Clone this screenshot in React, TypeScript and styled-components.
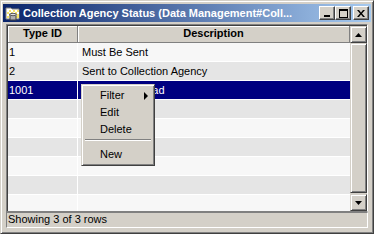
import React from 'react';
import styled, { createGlobalStyle } from 'styled-components';

const GlobalStyle = createGlobalStyle`
  html, body {
    margin: 0;
    padding: 0;
    background: #ffffff;
  }
  body {
    font-family: "Liberation Sans", Arial, sans-serif;
    font-size: 11px;
    color: #000;
  }
`;

const Window = styled.div`
  position: relative;
  width: 374px;
  height: 234px;
  box-sizing: border-box;
  background: #d4d0c8;
  border: 1px solid;
  border-color: #d4d0c8 #404040 #404040 #d4d0c8;
  box-shadow: inset 1px 1px #ffffff, inset -1px -1px #808080;
  padding: 3px 2px 5px 2px;
  display: flex;
  flex-direction: column;
  overflow: hidden;
`;

const TitleBar = styled.div`
  height: 18px;
  flex-shrink: 0;
  display: flex;
  align-items: center;
  padding: 0 2px;
  background: linear-gradient(90deg, #0a246a 0%, #a6caf0 100%);
`;

const TitleIcon = styled.svg`
  width: 16px;
  height: 16px;
  flex-shrink: 0;
`;

const TitleText = styled.div`
  flex: 1;
  margin-left: 2px;
  color: #ffffff;
  font-weight: bold;
  font-size: 11px;
  white-space: nowrap;
  overflow: hidden;
`;

const TitleButtons = styled.div`
  display: flex;
  align-items: center;
`;

const TitleButton = styled.div<{ gap?: number }>`
  width: 16px;
  height: 14px;
  box-sizing: border-box;
  margin-left: ${({ gap }) => gap ?? 0}px;
  background: #d4d0c8;
  border: 1px solid;
  border-color: #ffffff #404040 #404040 #ffffff;
  box-shadow: inset -1px -1px #808080;
  display: flex;
  align-items: center;
  justify-content: center;
`;

const Body = styled.div`
  flex: 1;
  display: flex;
  flex-direction: column;
  padding: 2px 3px 0 3px;
  min-height: 0;
`;

const Grid = styled.div`
  flex: 1;
  min-height: 0;
  display: flex;
  box-sizing: border-box;
  border: 1px solid;
  border-color: #808080 #ffffff #808080 #808080;
  box-shadow: inset 1px 1px #404040;
  padding: 1px 0 0 1px;
  overflow: hidden;
`;

const Table = styled.div`
  flex: 1;
  display: flex;
  flex-direction: column;
  overflow: hidden;
  background: #f7f7f7;
`;

const HeaderRow = styled.div`
  display: flex;
  height: 17px;
  flex-shrink: 0;
  background: #d4d0c8;
  border-bottom: 1px solid #808080;
  box-sizing: border-box;
`;

const HeaderCell = styled.div<{ w?: number }>`
  ${({ w }) => (w ? `width: ${w}px;` : 'flex: 1;')}
  box-sizing: border-box;
  flex-shrink: 0;
  text-align: center;
  font-weight: bold;
  line-height: 15px;
  border-right: 1px solid #808080;
  box-shadow: inset 1px 1px #ffffff;
`;

const Row = styled.div<{ stripe: 'light' | 'dark' | 'selected' }>`
  display: flex;
  height: 19px;
  flex-shrink: 0;
  box-sizing: border-box;
  border-bottom: 1px solid #ffffff;
  background: ${({ stripe }) =>
    stripe === 'selected' ? '#000080' : stripe === 'dark' ? '#e5e5e5' : '#f7f7f7'};
  color: ${({ stripe }) => (stripe === 'selected' ? '#ffffff' : '#000000')};
`;

const Cell = styled.div<{ w?: number; pad: number }>`
  ${({ w }) => (w ? `width: ${w}px;` : 'flex: 1;')}
  flex-shrink: 0;
  box-sizing: border-box;
  padding-left: ${({ pad }) => pad}px;
  line-height: 18px;
  white-space: nowrap;
  overflow: hidden;
  border-right: ${({ w }) => (w ? '1px solid #ffffff' : 'none')};
`;

const ScrollBar = styled.div`
  width: 17px;
  flex-shrink: 0;
  display: flex;
  flex-direction: column;
  background: #d4d0c8;
`;

const ScrollButton = styled.div`
  height: 17px;
  flex-shrink: 0;
  box-sizing: border-box;
  border: 1px solid;
  border-color: #d4d0c8 #404040 #404040 #d4d0c8;
  box-shadow: inset 1px 1px #ffffff, inset -1px -1px #808080;
  display: flex;
  align-items: center;
  justify-content: center;
`;

const ScrollThumb = styled.div`
  flex: 1;
  box-sizing: border-box;
  border: 1px solid;
  border-color: #d4d0c8 #404040 #404040 #d4d0c8;
  box-shadow: inset 1px 1px #ffffff, inset -1px -1px #808080;
  margin-bottom: 1px;
`;

const StatusBar = styled.div`
  height: 16px;
  flex-shrink: 0;
  box-sizing: border-box;
  border: 1px solid;
  border-color: #808080 #ffffff #ffffff #808080;
  padding-left: 1px;
  line-height: 13px;
  white-space: nowrap;
`;

const Menu = styled.div`
  position: absolute;
  left: 80px;
  top: 83px;
  width: 74px;
  box-sizing: border-box;
  background: #d4d0c8;
  border: 1px solid;
  border-color: #d4d0c8 #404040 #404040 #d4d0c8;
  box-shadow: inset 1px 1px #ffffff, inset -1px -1px #808080;
  padding: 2px 2px 2px 2px;
`;

const MenuItem = styled.div`
  position: relative;
  height: 17px;
  line-height: 17px;
  padding-left: 16px;
`;

const MenuArrow = styled.span`
  position: absolute;
  right: 4px;
  top: 5px;
  width: 0;
  height: 0;
  border-top: 4px solid transparent;
  border-bottom: 4px solid transparent;
  border-left: 4px solid #000000;
`;

const MenuSeparator = styled.div`
  height: 0;
  margin: 1px 1px 5px 1px;
  border-top: 1px solid #808080;
  border-bottom: 1px solid #ffffff;
`;

const rows = [
  { id: '1', desc: 'Must Be Sent' },
  { id: '2', desc: 'Sent to Collection Agency' },
  { id: '1001', desc: 'Reportedly Dead' },
  { id: '', desc: '' },
  { id: '', desc: '' },
  { id: '', desc: '' },
  { id: '', desc: '' },
  { id: '', desc: '' },
  { id: '', desc: '' },
];

const AppIcon = () => (
  <TitleIcon viewBox="0 0 16 16">
    <path d="M1 3h5l1 1h7v10H1z" fill="#ffffff" stroke="#808080" strokeWidth="1" />
    <rect x="2" y="5" width="12" height="8" fill="#f7e66a" />
    <path d="M2 5h2v2H2zM6 5h2v2H6zM10 5h2v2h-2zM4 7h2v2H4zM8 7h2v2H8zM12 7h2v2h-2zM2 9h2v2H2zM6 9h2v2H6zM10 9h2v2h-2zM4 11h2v2H4zM8 11h2v2H8z" fill="#ffffff" />
    <rect x="5" y="9" width="6" height="6" fill="#b0b0b0" stroke="#404040" strokeWidth="1" />
    <ellipse cx="8" cy="9.5" rx="3" ry="1.2" fill="#e0e0e0" stroke="#404040" strokeWidth="0.8" />
  </TitleIcon>
);

export default function App() {
  return (
    <>
      <GlobalStyle />
      <Window>
        <TitleBar>
          <AppIcon />
          <TitleText>Collection Agency Status (Data Management#Coll...</TitleText>
          <TitleButtons>
            <TitleButton>
              <svg width="8" height="7" viewBox="0 0 8 7">
                <rect x="1" y="5" width="6" height="2" fill="#000" />
              </svg>
            </TitleButton>
            <TitleButton>
              <svg width="9" height="9" viewBox="0 0 9 9">
                <path d="M0 0h9v9H0zM1 2v6h7V2z" fill="#000" fillRule="evenodd" />
              </svg>
            </TitleButton>
            <TitleButton gap={2}>
              <svg width="8" height="7" viewBox="0 0 8 7">
                <path d="M0 0h2l2 2.5L6 0h2L5 3.5 8 7H6L4 4.5 2 7H0l3-3.5z" fill="#000" />
              </svg>
            </TitleButton>
          </TitleButtons>
        </TitleBar>
        <Body>
          <Grid>
            <Table>
              <HeaderRow>
                <HeaderCell w={70}>Type ID</HeaderCell>
                <HeaderCell>Description</HeaderCell>
              </HeaderRow>
              {rows.map((r, i) => (
                <Row
                  key={i}
                  stripe={r.id === '1001' ? 'selected' : i % 2 === 1 ? 'dark' : 'light'}
                >
                  <Cell w={70} pad={1}>{r.id}</Cell>
                  <Cell pad={4}>{r.desc}</Cell>
                </Row>
              ))}
            </Table>
            <ScrollBar>
              <ScrollButton>
                <svg width="7" height="4" viewBox="0 0 7 4">
                  <path d="M3.5 0L7 4H0z" fill="#000" />
                </svg>
              </ScrollButton>
              <ScrollThumb />
              <ScrollButton>
                <svg width="7" height="4" viewBox="0 0 7 4">
                  <path d="M0 0h7L3.5 4z" fill="#000" />
                </svg>
              </ScrollButton>
            </ScrollBar>
          </Grid>
          <StatusBar>Showing 3 of 3 rows</StatusBar>
        </Body>
        <Menu>
          <MenuItem>
            Filter
            <MenuArrow />
          </MenuItem>
          <MenuItem>Edit</MenuItem>
          <MenuItem>Delete</MenuItem>
          <MenuSeparator />
          <MenuItem>New</MenuItem>
        </Menu>
      </Window>
    </>
  );
}
